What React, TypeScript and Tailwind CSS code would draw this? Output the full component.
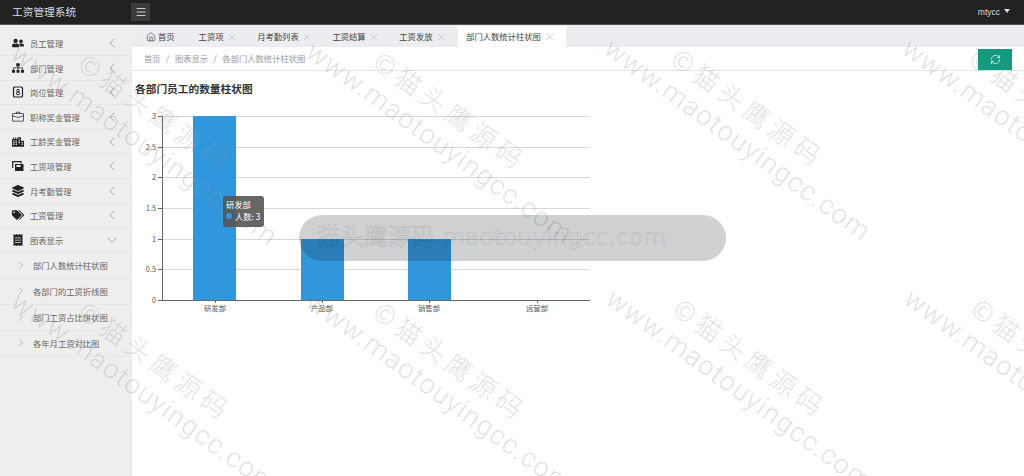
import {ChevronDown, ChevronLeft, ChevronRight, House, Menu, RefreshCw, X} from 'lucide-react';
import {BsBriefcase} from 'react-icons/bs';
import {FaCity, FaLayerGroup, FaReceipt, FaSitemap, FaTags, FaUserFriends} from 'react-icons/fa';

function BadgeIcon() {
    return (
        <svg width="12" height="12" viewBox="0 0 12 12" className="shrink-0">
            <rect x="1.5" y="1" width="9" height="10" rx="1" fill="none" stroke="#222" strokeWidth="1.2" />
            <ellipse cx="6" cy="4.6" rx="1.3" ry="1.2" fill="none" stroke="#222" />
            <ellipse cx="6" cy="7.4" rx="1.7" ry="1.4" fill="none" stroke="#222" />
        </svg>
    );
}

function ItemsIcon() {
    return (
        <svg width="12" height="12" viewBox="0 0 12 12" className="shrink-0">
            <path d="M0.7 8V1.7H9V3.5" fill="none" stroke="#222" strokeWidth="1.2" />
            <rect x="3" y="4" width="8.5" height="7" fill="#222" />
            <rect x="4.5" y="5" width="4" height="2" fill="#eee" />
        </svg>
    );
}

const menus = [
    {name: '员工管理', icon: <FaUserFriends size={12} className="shrink-0 text-[#222]" />},
    {name: '部门管理', icon: <FaSitemap size={12} className="shrink-0 text-[#222]" />},
    {name: '岗位管理', icon: <BadgeIcon />},
    {name: '职称奖金管理', icon: <BsBriefcase size={12} className="shrink-0 text-[#333]" />},
    {name: '工龄奖金管理', icon: <FaCity size={12} className="shrink-0 text-[#222]" />},
    {name: '工资项管理', icon: <ItemsIcon />},
    {name: '月考勤管理', icon: <FaLayerGroup size={12} className="shrink-0 text-[#222]" />},
    {name: '工资管理', icon: <FaTags size={12} className="shrink-0 text-[#222]" />},
];

const subMenus = ['部门人数统计柱状图', '各部门的工资折线图', '部门工资占比饼状图', '各年月工资对比图'];
const tabs = ['工资项', '月考勤列表', '工资结算', '工资发放'];

// where each "www" starts, on the centre line of the text
const marks = [
    [15, 50], [310, 48], [608, 45], [906, 45],
    [15, 298], [310, 298], [610, 295], [908, 295],
];

const yTicks = [
    {label: '3', y: 116},
    {label: '2.5', y: 147},
    {label: '2', y: 177},
    {label: '1.5', y: 208},
    {label: '1', y: 239},
    {label: '0.5', y: 269},
    {label: '0', y: 300},
];

const bars = [
    {label: '研发部', x: 193, top: 116, center: 215},
    {label: '产品部', x: 301, top: 239, center: 322},
    {label: '销售部', x: 408, top: 239, center: 429},
    {label: '运营部', x: 515, top: 300, center: 537},
];

function Chart() {
    return (
        <svg width="480" height="210" viewBox="130 110 480 210" className="block">
            {yTicks.map((t) => (
                <g key={t.label}>
                    {t.y !== 300 && <line x1="162" x2="590" y1={t.y + 0.5} y2={t.y + 0.5} stroke="#d9d9d9" />}
                    <line x1="158" x2="162" y1={t.y + 0.5} y2={t.y + 0.5} stroke="#666" />
                    <text x="156" y={t.y + 2.5} textAnchor="end" fontSize="7.3" fill="#555">{t.label}</text>
                </g>
            ))}
            {bars.map((b) => (
                <g key={b.label}>
                    <rect x={b.x} y={b.top} width="43" height={300 - b.top} fill="#3097dc" />
                    <line x1={b.center + 0.5} x2={b.center + 0.5} y1="300" y2="303" stroke="#666" />
                    <text x={b.center} y="311" textAnchor="middle" fontSize="7.3" fill="#555">{b.label}</text>
                </g>
            ))}
            <line x1="162.5" x2="162.5" y1="116" y2="300" stroke="#666" />
            <line x1="158" x2="590" y1="300.5" y2="300.5" stroke="#666" />
        </svg>
    );
}

export default function App() {
    return (
        <div className="relative h-[476px] w-[1024px] overflow-hidden bg-white text-[8.3px] text-[#666] font-['Noto_Sans_CJK_SC','Noto_Sans',sans-serif]">
            <header className="flex h-[25px] items-center bg-[#222] border-b border-[#555]">
                <div className="w-[131px] pl-3 text-[10.7px] text-[#ddd]">工资管理系统</div>
                <button className="flex h-[18px] w-[19px] items-center justify-center bg-[#3c3c3c] text-[#ccc]">
                    <Menu size={12} />
                </button>
                <div className="ml-auto flex items-center gap-1 pr-[14px] text-[8.5px] text-[#ddd] font-['Liberation_Sans',sans-serif]">
                    mtycc
                    <span className="mb-0.5 h-0 w-0 border-x-[3.5px] border-t-[4px] border-x-transparent border-t-[#ddd]" />
                </div>
            </header>
            <div className="flex h-[451px]">
                <aside className="w-[132px] shrink-0 bg-[#eee] pt-[6.5px]">
                    {menus.map((m) => (
                        <div key={m.name} className="flex h-[24.6px] items-center border-b border-[#e6e6e6] pl-3 pr-3">
                            {m.icon}
                            <span className="ml-[6px]">{m.name}</span>
                            <ChevronLeft size={16} strokeWidth={1.2} className="ml-auto text-[#999]" />
                        </div>
                    ))}
                    <div className="flex h-[24.6px] items-center border-b border-[#e6e6e6] pl-3 pr-3">
                        <FaReceipt size={12} className="shrink-0 text-[#222]" />
                        <span className="ml-[6px]">图表显示</span>
                        <ChevronDown size={16} strokeWidth={1.2} className="ml-auto text-[#999]" />
                    </div>
                    {subMenus.map((s) => (
                        <div key={s} className="flex h-[26px] items-center border-b border-[#e6e6e6] pl-[15px]">
                            <ChevronRight size={12} strokeWidth={1.2} className="text-[#999]" />
                            <span className="ml-[6px]">{s}</span>
                        </div>
                    ))}
                </aside>
                <main className="min-w-0 flex-1">
                    <nav className="flex h-[22px] items-end bg-[#ecedf0] pl-[6px]">
                        <div className="flex h-[21px] items-center pl-2 pr-[16px]">
                            <House size={10} className="text-[#666]" />
                            <span className="ml-[2px] text-[#444]">首页</span>
                        </div>
                        {tabs.map((t) => (
                            <div key={t} className="flex h-[21px] items-center pl-2 pr-[11.2px]">
                                <span className="text-[#444]">{t}</span>
                                <X size={12} strokeWidth={1.2} className="ml-[2.5px] text-[#bbb]" />
                            </div>
                        ))}
                        <div className="flex h-[21px] items-center bg-white pl-2 pr-[10px]">
                            <span className="text-[#444]">部门人数统计柱状图</span>
                            <X size={12} strokeWidth={1.2} className="ml-[3px] text-[#bbb]" />
                        </div>
                    </nav>
                    <div className="flex h-[24px] items-center border-b border-[#e5e5e5] pl-3 pr-3 text-[#999]">
                        <span>首页</span>
                        <span className="mx-[5.5px]">/</span>
                        <span>图表显示</span>
                        <span className="mx-[5.5px]">/</span>
                        <span>各部门人数统计柱状图</span>
                        <button className="relative z-10 ml-auto flex h-[21px] w-[34px] items-center justify-center self-end bg-[#159a80] text-white">
                            <RefreshCw size={11} strokeWidth={1.5} />
                        </button>
                    </div>
                    <h2 className="mt-[10px] pl-[3px] text-[10.7px] font-bold leading-[16px] text-[#333]">各部门员工的数量柱状图</h2>
                    <div className="mt-[13px] -ml-[2px]">
                        <Chart />
                    </div>
                </main>
            </div>

            {/* watermarks */}
            {marks.map(([x, y]) => (
                <div
                    key={`${x}-${y}`}
                    className="pointer-events-none absolute origin-top-left rotate-[36deg] whitespace-nowrap text-[#999]/30"
                    style={{left: x + 26, top: y - 36}}
                >
                    <div className="ml-[60px] mb-[6px] h-[24px] text-[26px] tracking-[5px] leading-[24px] font-light font-['Noto_Sans_CJK_SC',sans-serif]">©猫头鹰源码</div>
                    <div className="h-[30px] text-[27px] tracking-[1.4px] leading-[30px] font-light font-['Roboto',sans-serif]">www.maotouyingcc.com</div>
                </div>
            ))}

            {/* tooltip */}
            <div className="absolute left-[223px] top-[196px] h-[31px] w-[41px] rounded-[3px] bg-[#555]/90 px-[3px] pt-[2px] text-[8.3px] leading-[12px] text-white">
                <div>研发部</div>
                <div className="flex items-center">
                    <span className="mr-[3px] h-[6px] w-[6px] rounded-full bg-[#3097dc]" />
                    人数: 3
                </div>
            </div>

            {/* site banner */}
            <div className="absolute left-[299px] top-[215px] flex h-[46px] w-[427px] items-center rounded-[23px] bg-[#141820]/20 pl-[18px] text-[23.5px] text-transparent [-webkit-text-stroke:0.6px_#00000024] font-['DejaVu_Sans','Noto_Sans_CJK_SC',sans-serif]">
                猫头鹰源码 maotouyingcc.com
            </div>
        </div>
    );
}
